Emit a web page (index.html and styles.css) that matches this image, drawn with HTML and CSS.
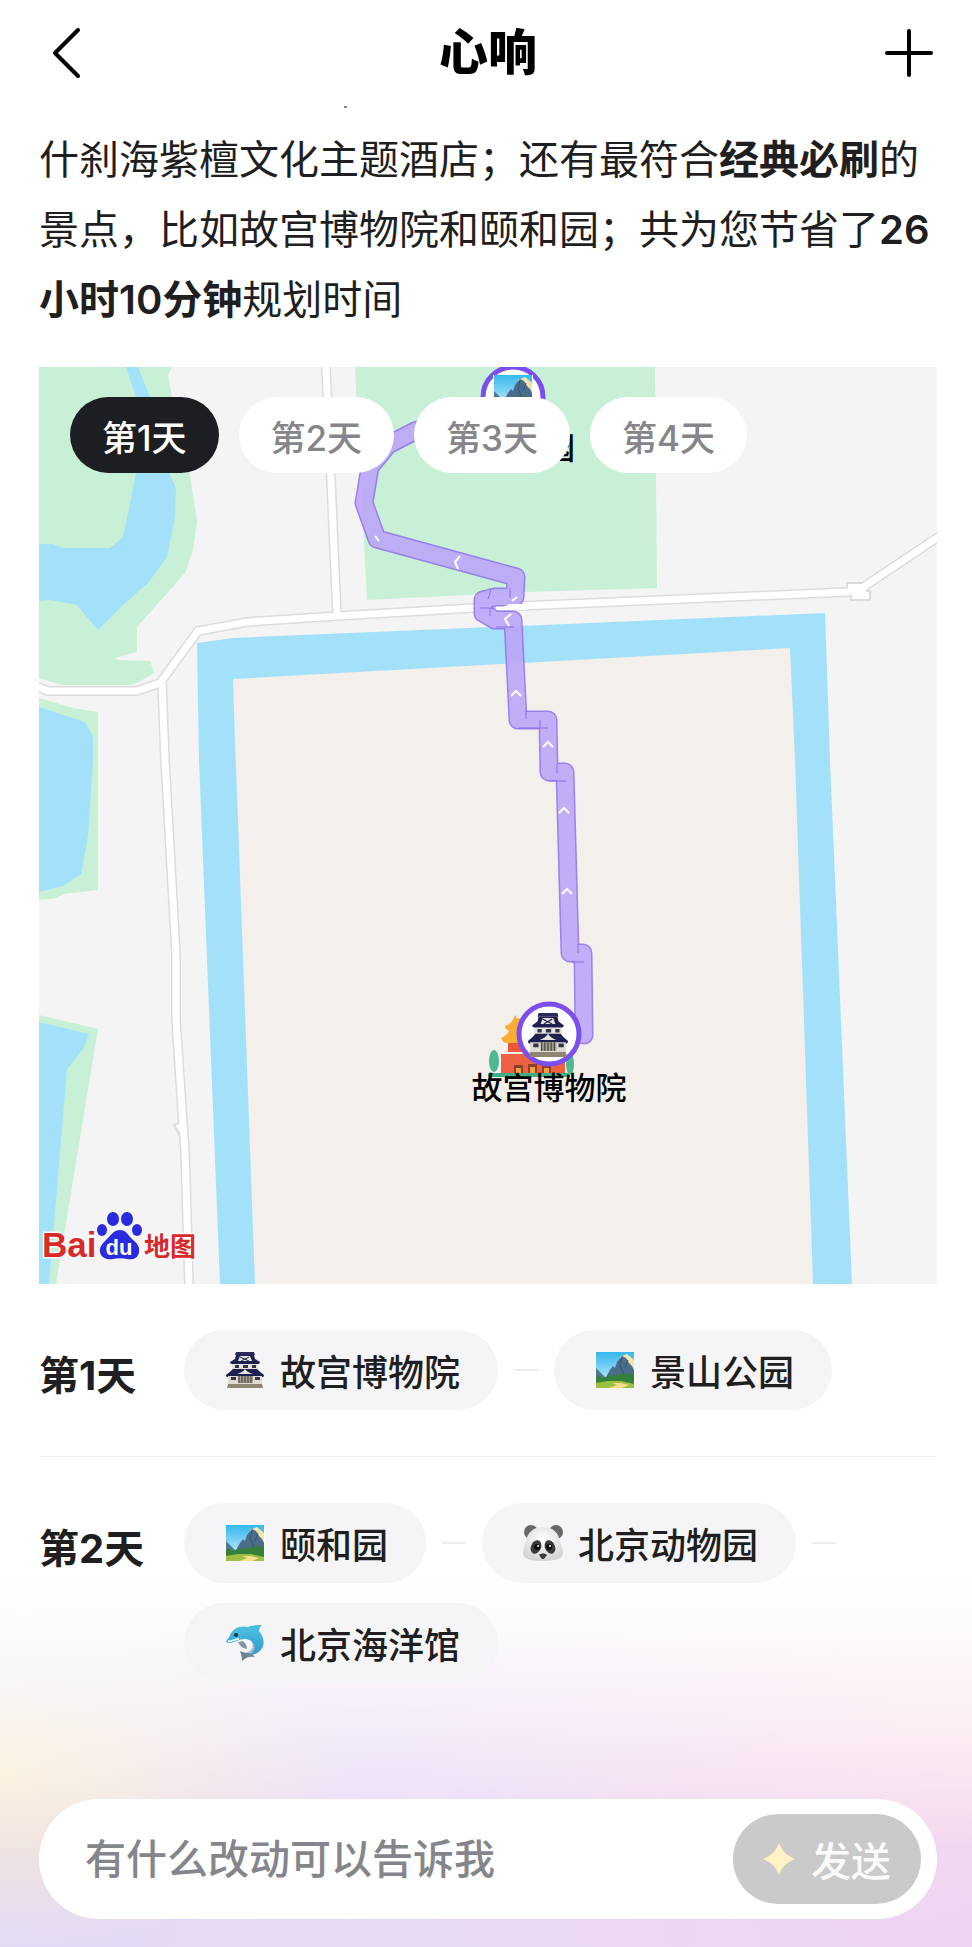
FILE: index.html
```html
<!DOCTYPE html>
<html lang="zh-CN">
<head>
    <meta charset="UTF-8">
    <meta name="viewport" content="width=device-width, initial-scale=1.0">
    <title>心响</title>
    <link rel="stylesheet" href="styles.css">
</head>
<body>

    <!-- emoji -->
    <svg class="sprite" aria-hidden="true">
        <defs>
            <linearGradient id="sky" x1="0" y1="0" x2="0" y2="1">
                <stop offset="0" stop-color="#35b8ee"/>
                <stop offset="1" stop-color="#d8f3fb"/>
            </linearGradient>
            <linearGradient id="fish" x1="0" y1="0" x2="0" y2="1">
                <stop offset="0" stop-color="#4fc0e4"/>
                <stop offset="1" stop-color="#2f9cc8"/>
            </linearGradient>
            <radialGradient id="fur" cx="50%" cy="35%" r="65%">
                <stop offset="0" stop-color="#ffffff"/>
                <stop offset="1" stop-color="#d4d4d6"/>
            </radialGradient>
        </defs>
        <symbol id="castle" viewBox="0 0 40 36" preserveAspectRatio="none">
            <path d="M11 0h18l1 3H10z" fill="#2a2a5c"/>
            <path d="M11 3h18l1 4 5 3c0 2-2 2-3 2H8c-1 0-3 0-3-2l5-3z" fill="#1f1f50"/>
            <path d="M13 9l2-5h10l2 5z" fill="#e9e6e0"/>
            <path d="M15 5l9 4M24 5l-8 4" stroke="#1f1f50" stroke-width="1"/>
            <path d="M7 12h26v7H7z" fill="#e6e2db"/>
            <path d="M10 13h4v3h-4zM18 13h5v3h-5zM27 13h4v3h-4z" fill="#333349"/>
            <path d="M8 17h24l2 2 5 4c0 2-1 2-2 2H3c-1 0-2 0-2-2l5-4z" fill="#1f1f50"/>
            <path d="M12 22c3-1 6-2 8-5 2 3 5 4 8 5z" fill="#e6e2db"/>
            <path d="M3 24h34v9H3z" fill="#e0dbd2"/>
            <path d="M6 25h5v3H6zM30 25h5v3h-5z" fill="#333349"/>
            <path d="M13 24h15v7H13z" fill="#a59e8f"/>
            <path d="M14 24v7M17 24v7M20 24v7M23 24v7M26 24v7" stroke="#3c3a38"/>
            <path d="M3 32h34l1 4H2z" fill="#8d8673"/>
        </symbol>
        <symbol id="landscape" viewBox="0 0 40 36" preserveAspectRatio="none">
            <path d="M0 0h40v36H0z" fill="#fdfdfb"/>
            <path d="M1 0h38v36H1z" fill="url(#sky)"/>
            <path d="M25 5l7-3 7 6v9H25z" fill="#f1e6a8"/>
            <path d="M1 16l4 4 5 5v6H1z" fill="#51788f"/>
            <path d="M10 27l5-9 3-4 2 2 2-6 5-6 4 2 3 5 3 3 2 4v12H10z" fill="#4b6d8c"/>
            <path d="M27 5l-2 9 4 8-3 4M33 8l-3 8" fill="none" stroke="#35536f" stroke-width="1"/>
            <path d="M1 25l3-2 3 3 4-1 3-3 3 3 4-3 3 2 2-4 3 3 3-3 3 3 2-2 2 3v9H1z" fill="#35803a"/>
            <path d="M1 31l12-2 13 0 13 3v4H1z" fill="#9cbf42"/>
            <path d="M17 31l9 0 8 2-7 3H14l8-3z" fill="#f4e08a"/>
        </symbol>
        <symbol id="panda" viewBox="0 0 40 36">
            <circle cx="8" cy="7" r="7" fill="#68686b"/>
            <circle cx="33" cy="7" r="7" fill="#68686b"/>
            <path d="M20 2c10 0 16 6 17 15 2 4 3 8 3 11 0 6-8 8-20 8S0 34 0 28c0-3 1-7 3-11C4 8 10 2 20 2z" fill="url(#fur)"/>
            <ellipse cx="13" cy="22" rx="5" ry="7" fill="#3a3a3d" transform="rotate(24 13 22)"/>
            <ellipse cx="27" cy="22" rx="5" ry="7" fill="#3a3a3d" transform="rotate(-24 27 22)"/>
            <circle cx="14" cy="22" r="3" fill="#0d0d0f"/>
            <circle cx="26" cy="22" r="3" fill="#0d0d0f"/>
            <circle cx="15" cy="21" r="1" fill="#fff"/>
            <circle cx="27" cy="21" r="1" fill="#fff"/>
            <path d="M16 30c2-2 6-2 8 0l-3 4h-2z" fill="#3a3a3d"/>
        </symbol>
        <symbol id="dolphin" viewBox="0 0 40 36">
            <path d="M5 16c5 0 9-2 15-2 8 0 14 4 13 11-2 5-6 5-10 4 4-3 5-6 1-9-5-1-13 0-19-4z" fill="#f7fafb"/>
            <path d="M29 14c6 7 3 13-5 16l-3-2c6-2 8-6 6-11z" fill="#a9b9c3"/>
            <path d="M1 17c1-3 3-4 4-7C8 3 15 0 23 2c4-2 9-2 14-2-2 2-3 4-3 6 6 7 7 17-2 22-2 1-4 2-7 2 6-5 6-10 1-14-5-3-10-2-14 0-4 1-8 3-11 1z" fill="url(#fish)"/>
            <path d="M3 16c4 1 7-2 11-2" fill="none" stroke="#d7f2fa" stroke-width="2"/>
            <path d="M13 17c2 4 4 6 9 7 0-4-2-6-4-8z" fill="#8496a2"/>
            <path d="M15 26c3 1 5 2 8 2 3 0 5 2 7 4-5-1-9 0-13 4 0-4-1-7-2-10z" fill="#6f8594"/>
            <circle cx="11" cy="10" r="2" fill="#12324a"/>
        </symbol>
    </svg>

    <div class="page">
        <header class="header">
            <button class="icon-btn" type="button" aria-label="返回">
                <svg viewBox="0 0 56 56"><path d="M39 5L16 28l23 23"/></svg>
            </button>
            <h1>心响</h1>
            <button class="icon-btn" type="button" aria-label="新建">
                <svg viewBox="0 0 56 56"><path d="M28 6v44M6 28h44"/></svg>
            </button>
        </header>

        <main class="content">
            <p class="intro">什刹海紫檀文化主题酒店；还有最符合<strong>经典必刷</strong>的景点，比如故宫博物院和颐和园；共为您节省了<strong>26小时10分钟</strong>规划时间</p>

            <section class="map">
                <svg class="map-canvas" viewBox="0 0 898 917" role="img" aria-label="第1天路线">
                    <!-- parks and water -->
                    <g fill="#c7f0d6">
                        <path d="M0 0H133L129 8 133 30 151 108 158 155 154 183 146 206 98 260V285L76 291 79 293 111 294 115 306 98 316 91 318H24L0 311z"/>
                        <path d="M0 331L34 341 59 345V523L24 527 18 531 0 533z"/>
                        <path d="M0 648L59 662 17 917H0z"/>
                        <path d="M316 0H616L618 221 488 225 328 233z"/>
                    </g>
                    <g fill="#a3e1fb">
                        <path d="M87 0H99L111 30 131 108 137 121 136 150 128 190 109 216 85 237 59 263 38 238 11 233 0 234V177H13L24 181H71L84 170 93 126 97 106V30z"/>
                        <path d="M0 340L46 355 54 370V393L53 409 49 469 42 507 24 519 0 525z"/>
                        <path d="M0 655L50 667 44 682 28 702 10 917H0z"/>
                        <path d="M158 276L194 271 786 246 791 393 813 917H181L160 393z"/>
                    </g>
                    <path d="M194 312L751 281 756 393 774 917H216L196 373z" fill="#f3efeb"/>

                    <!-- roads -->
                    <g class="road-edge">
                        <path d="M287 0L298 249"/>
                        <path d="M123 316L126 393 134 534 137 587V653L144 757 146 784 150 917"/>
                        <path d="M-4 319L9 324H98L121 316 159 264 208 255 298 249 434 241 808 225 823 221 902 168"/>
                        <path d="M808 216h19v8h4v9h-19v-8h-4zM135 758l9-3v20z"/>
                    </g>
                    <g class="road">
                        <path d="M287 0L298 249"/>
                        <path d="M123 316L126 393 134 534 137 587V653L144 757 146 784 150 917"/>
                        <path d="M-4 319L9 324H98L121 316 159 264 208 255 298 249 434 241 808 225 823 221 902 168"/>
                    </g>
                    <path d="M809 217h18v8h3v7h-17v-8h-4zM137 758l8-2v17z" fill="#fff"/>

                    <!-- landmark -->
                    <g>
                        <path d="M449 706h82v4h-82z" fill="#3fae86"/>
                        <ellipse cx="455" cy="694" rx="5" ry="11" fill="#4db891"/>
                        <ellipse cx="531" cy="697" rx="4" ry="11" fill="#4db891"/>
                        <path d="M469 673h20v12h-20z" fill="#ed5636"/>
                        <path d="M462 671c5-2 8-6 9-9h19v14h-22c-3 0-5-2-6-5zM466 659c5-2 8-5 9-9l2-2v3l13 2v11h-20c-2-1-4-3-4-5z" fill="#fbad36"/>
                        <path d="M462 687h64v19h-64z" fill="#ee6142"/>
                        <path d="M475 698h9v8h-9zM489 697h9v9h-9zM503 698h9v8h-9z" fill="#8c4228"/>
                        <path d="M477 701h5v5h-5zM491 700h5v6h-5zM505 701h5v5h-5z" fill="#f2a043"/>
                    </g>

                    <!-- route -->
                    <g class="route">
                        <path class="route-edge" d="M545 668L544 586H531L526 405H510L509 353H479L474 253H456L444 246V233L456 230H476L477 210 338 172 325 136 331 100 349 78 376 64 474 30"/>
                        <path class="route-line" d="M545 668L544 586H531L526 405H510L509 353H479L474 253H456L444 246V233L456 230H476L477 210 338 172 325 136 331 100 349 78 376 64 474 30"/>
                    </g>
                    <g class="route-joint">
                        <path d="M441 241h16M452 223l-3 9M451 241v8M471 221v10M457 260h18M487 352v-9M480 361h29M501 353v8M518 406v-9M510 414h17M539 586v-9M532 595h13"/>
                    </g>
                    <path d="M461 241l10-4h16v6h-16z" fill="#fff"/>
                    <path class="arrows" d="M421 189l-5 6 3 7M472 247l-6 5 4 7M473 234l5-4M336 169l4 5M472 329l5-5 5 5M504 380l5-5 5 5M520 446l5-5 5 5M523 527l5-5 5 5"/>

                    <!-- markers -->
                    <circle class="pin" cx="474" cy="30" r="30"/>
                    <use href="#landscape" x="454" y="8" width="40" height="36"/>
                    <circle class="pin" cx="510" cy="667" r="30"/>
                    <use href="#castle" x="488" y="646" width="42" height="44"/>
                    <text class="place" x="474" y="92">景山公园</text>
                    <text class="place" x="510" y="732">故宫博物院</text>

                    <!-- map provider -->
                    <g class="brand">
                        <text class="brand-name" x="3" y="890">Bai</text>
                        <text class="brand-map" x="105" y="889">地图</text>
                        <g fill="#2a2ade">
                            <ellipse cx="63" cy="863" rx="5" ry="6"/>
                            <ellipse cx="74" cy="852" rx="6" ry="7"/>
                            <ellipse cx="88" cy="852" rx="6" ry="7"/>
                            <ellipse cx="98" cy="863" rx="5" ry="6"/>
                            <path d="M81 863c6 0 8 5 12 9 5 4 8 8 7 13-1 7-7 8-12 7-5-1-9-1-14 0-6 1-12-1-13-7-1-5 3-9 7-13 4-4 7-9 13-9z"/>
                        </g>
                        <text class="brand-du" x="80" y="888">du</text>
                    </g>
                </svg>

                <nav class="tabs">
                    <button class="tab active" type="button">第1天</button>
                    <button class="tab" type="button">第2天</button>
                    <button class="tab" type="button">第3天</button>
                    <button class="tab" type="button">第4天</button>
                </nav>
            </section>

            <section class="day">
                <h2>第1天</h2>
                <ul class="stops">
                    <li><span class="chip"><svg><use href="#castle"/></svg>故宫博物院</span></li>
                    <li><span class="chip"><svg><use href="#landscape"/></svg>景山公园</span></li>
                </ul>
            </section>

            <section class="day">
                <h2>第2天</h2>
                <ul class="stops">
                    <li><span class="chip"><svg><use href="#landscape"/></svg>颐和园</span></li>
                    <li><span class="chip"><svg><use href="#panda"/></svg>北京动物园</span></li>
                    <li><span class="chip"><svg><use href="#dolphin"/></svg>北京海洋馆</span></li>
                </ul>
            </section>
        </main>

        <form class="composer">
            <input type="text" aria-label="有什么改动可以告诉我" placeholder="有什么改动可以告诉我">
            <button class="send" type="button">
                <svg viewBox="0 0 32 32"><path d="M16 0c3 8 7 12 16 16-9 4-13 8-16 16-3-8-7-12-16-16C9 12 13 8 16 0z"/></svg>
                发送
            </button>
        </form>
    </div>

</body>
</html>
```
FILE: styles.css
```css
* {
    box-sizing: border-box;
}

body {
    margin: 0;
    background-color: #fff;
    color: #1f1f21;
    font-family: Inter, "Noto Sans CJK SC", sans-serif;
}

button,
input {
    font-family: inherit;
    border: none;
}

.sprite {
    position: absolute;
    width: 0;
    height: 0;
}

.page {
    min-height: 100vh;
    display: flex;
    flex-direction: column;
    padding: 0 35px 28px 39px;
    background-image:
        linear-gradient(to bottom, #fff 0, rgba(255, 255, 255, 0.8) 20%, rgba(255, 255, 255, 0) 75%),
        radial-gradient(ellipse 36% 48% at 0% 52%, #f9ecd2 0, rgba(249, 236, 210, 0) 100%),
        radial-gradient(ellipse 60% 60% at 100% 38%, #f8dcea 0, rgba(248, 220, 234, 0) 100%),
        linear-gradient(to right, #e3daf5 0, #e9d9f4 50%, #eed4f3 100%);
    background-repeat: no-repeat;
    background-position: bottom;
    background-size: 100% 372px;
}

/* header */
.header {
    display: flex;
    justify-content: space-between;
    align-items: center;
    height: 106px;
}

.header h1 {
    margin: 0;
    color: #000;
    font-size: 49px;
    font-weight: 900;
    line-height: 56px;
}

.icon-btn {
    padding: 0;
    background: none;
    cursor: pointer;
}

.icon-btn svg {
    display: block;
    width: 56px;
    height: 56px;
    fill: none;
    stroke: #000;
    stroke-width: 4;
    stroke-linecap: round;
    stroke-linejoin: round;
}

.intro {
    position: relative;
    margin: 19px 0 32px;
    font-size: 40px;
    line-height: 70px;
}

/* tail of the line scrolled under the header */
.intro::before {
    content: "";
    position: absolute;
    top: -19px;
    left: 34%;
    width: 3px;
    height: 2px;
    background-color: #8a8a8a;
}

.intro strong {
    font-weight: 600;
}

/* map */
.map {
    position: relative;
    background-color: #f4f4f4;
    overflow: hidden;
}

.map-canvas {
    display: block;
    width: 100%;
}

.road-edge path {
    fill: none;
    stroke: #dcdcdc;
    stroke-width: 10;
}

.road-edge path:last-child {
    stroke-width: 2;
}

.road path {
    fill: none;
    stroke: #fff;
    stroke-width: 7;
}

.route {
    opacity: 0.9;
    fill: none;
    stroke-linejoin: round;
    stroke-linecap: round;
}

.route-edge {
    stroke: #9374ec;
    stroke-width: 19;
}

.route-line {
    stroke: #bda6f9;
    stroke-width: 16;
}

.route-joint {
    fill: none;
    stroke: #8d6dee;
    stroke-width: 1;
}

.arrows {
    fill: none;
    stroke: #fff;
    stroke-width: 2;
}

.pin {
    fill: #fff;
    stroke: #7b4fee;
    stroke-width: 5;
}

.place {
    font-size: 31px;
    font-weight: 500;
    text-anchor: middle;
}

.brand text {
    font-weight: 700;
    paint-order: stroke;
}

.brand-name,
.brand-map {
    fill: #d92a2a;
    stroke: #fff;
    stroke-width: 3;
}

.brand-name {
    font-family: "Liberation Sans", sans-serif;
    font-size: 35px;
}

.brand-map {
    font-size: 26px;
}

.brand-du {
    fill: #fff;
    font-family: "Liberation Sans", sans-serif;
    font-size: 22px;
    text-anchor: middle;
}

.tabs {
    position: absolute;
    top: 30px;
    left: 31px;
    display: flex;
    gap: 20px;
}

.tab {
    height: 76px;
    padding: 0 32px;
    border-radius: 38px;
    background-color: #fff;
    color: #85858a;
    font-size: 35px;
    font-weight: 500;
    white-space: nowrap;
    cursor: pointer;
}

.tab.active {
    background-color: #1d1e22;
    color: #fff;
}

/* days */
.day {
    display: flex;
    align-items: flex-start;
    padding: 46px 0 34px;
}

.day + .day {
    border-top: 1px solid #f1f1f2;
}

.day h2 {
    flex: 0 0 145px;
    margin: 0;
    font-size: 40px;
    font-weight: 700;
    line-height: 92px;
}

.stops {
    display: flex;
    flex-wrap: wrap;
    gap: 20px 16px;
    margin: 0;
    padding: 0;
    list-style: none;
}

.stops li {
    display: flex;
    align-items: center;
    gap: 16px;
}

.stops li:not(:last-child)::after {
    content: "";
    width: 24px;
    height: 2px;
    background-color: #eeeeef;
}

.chip {
    display: flex;
    align-items: center;
    gap: 15px;
    height: 80px;
    padding: 0 38px 0 41px;
    border-radius: 40px;
    background-color: #f5f5f7;
    font-size: 36px;
    font-weight: 500;
    white-space: nowrap;
}

.chip svg {
    width: 40px;
    height: 36px;
}

/* composer */
.composer {
    display: flex;
    align-items: center;
    height: 120px;
    margin-top: auto;
    padding: 0 16px 0 46px;
    border-radius: 60px;
    background-color: #fff;
}

.composer input {
    flex: 1;
    min-width: 0;
    padding: 0;
    background: none;
    font-size: 41px;
    font-weight: 500;
    outline: none;
}

.composer input::placeholder {
    color: #85858c;
    opacity: 1;
}

.send {
    display: flex;
    align-items: center;
    gap: 16px;
    height: 90px;
    padding: 0 30px;
    border-radius: 45px;
    background-color: #cacaca;
    color: #fafafa;
    font-size: 40px;
    font-weight: 500;
    white-space: nowrap;
}

.send svg {
    width: 32px;
    height: 32px;
    fill: #fdf2c4;
}
```
